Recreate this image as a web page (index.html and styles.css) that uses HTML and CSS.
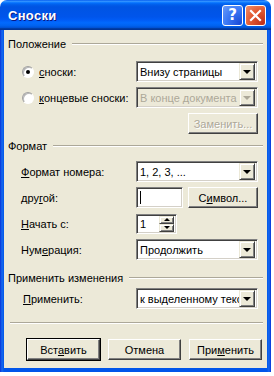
FILE: index.html
```html
<!DOCTYPE html>
<html lang="ru">
<head>
    <meta charset="UTF-8">
    <title>Сноски</title>
    <link rel="stylesheet" href="styles.css">
</head>
<body>
    <div class="window">
        <!-- Title bar -->
        <div class="titlebar">
            <span class="title">Сноски</span>
            <div class="caption-buttons">
                <span class="cap help">?</span>
                <span class="cap close">
                    <svg width="13" height="13" viewBox="0 0 13 13">
                        <path d="M2 2 L11 11 M11 2 L2 11" stroke="#fff" stroke-width="2.2" stroke-linecap="square"/>
                    </svg>
                </span>
            </div>
        </div>

        <div class="frame">
            <div class="dialog">
                <!-- Положение -->
                <div class="group-head first"><span>Положение</span><i class="rule"></i></div>
                <div class="rows first-rows">
                    <div class="row radio-row">
                        <label class="radio-label"><span class="radio checked"></span><span><u>с</u>носки:</span></label>
                        <div class="combo"><span class="combo-text">Внизу страницы</span><span class="drop"><i class="arrow"></i></span></div>
                    </div>
                    <div class="row radio-row">
                        <label class="radio-label"><span class="radio"></span><span><u>к</u>онцевые сноски:</span></label>
                        <div class="combo disabled"><span class="combo-text">В конце документа</span><span class="drop"><i class="arrow"></i></span></div>
                    </div>
                    <div class="row end">
                        <button class="btn small disabled">Заменить...</button>
                    </div>
                </div>

                <!-- Формат -->
                <div class="group-head second"><span>Формат</span><i class="rule"></i></div>
                <div class="rows second-rows">
                    <div class="row">
                        <span class="label"><u>Ф</u>ормат номера:</span>
                        <div class="combo"><span class="combo-text">1, 2, 3, ...</span><span class="drop"><i class="arrow"></i></span></div>
                    </div>
                    <div class="row">
                        <span class="label">дру<u>г</u>ой:</span>
                        <div class="pair">
                            <div class="field short"><i class="caret"></i></div>
                            <button class="btn small">С<u>и</u>мвол...</button>
                        </div>
                    </div>
                    <div class="row">
                        <span class="label"><u>Н</u>ачать с:</span>
                        <div class="pair">
                            <div class="field spin">
                                <span class="combo-text">1</span>
                                <span class="spin-btns">
                                    <span class="spin-btn"><i class="arrow up"></i></span>
                                    <span class="spin-btn"><i class="arrow"></i></span>
                                </span>
                            </div>
                        </div>
                    </div>
                    <div class="row">
                        <span class="label">Нум<u>е</u>рация:</span>
                        <div class="combo"><span class="combo-text">Продолжить</span><span class="drop"><i class="arrow"></i></span></div>
                    </div>
                </div>

                <!-- Применить изменения -->
                <div class="group-head third"><span>Применить изменения</span><i class="rule"></i></div>
                <div class="rows third-rows">
                    <div class="row">
                        <span class="label wide"><u>П</u>рименить:</span>
                        <div class="combo"><span class="combo-text">к выделенному тексту</span><span class="drop"><i class="arrow"></i></span></div>
                    </div>
                </div>

                <div class="separator"></div>

                <div class="footer">
                    <button class="btn default">Вст<u>а</u>вить</button>
                    <button class="btn">Отмена</button>
                    <button class="btn">При<u>м</u>енить</button>
                </div>
            </div>
        </div>
    </div>
</body>
</html>
```

FILE: styles.css
```css
body {
    margin: 0;
    background: #fff;
    font-family: "Liberation Sans", Arial, sans-serif;
    font-size: 11px;
    color: #000;
}

.window {
    width: 271px;
    height: 372px;
    display: flex;
    flex-direction: column;
}

/* Title bar */
.titlebar {
    height: 30px;
    box-sizing: border-box;
    display: flex;
    align-items: center;
    padding: 0 5px 0 8px;
    border-radius: 7px 7px 0 0;
    background: linear-gradient(#0058ee 0%, #3593ff 4%, #288eff 6%, #127dff 8%, #036ffc 10%, #0262ee 14%, #0057e5 20%, #0054e3 24%, #0055eb 56%, #005bf5 66%, #026afe 76%, #0062ef 86%, #0052d6 92%, #0040ab 94%, #003092 100%);
}

.title {
    flex: 1;
    color: #fff;
    font-weight: bold;
    font-size: 13px;
    letter-spacing: 0.3px;
    text-shadow: 1px 1px #0a1883;
}

.caption-buttons {
    display: flex;
    gap: 2px;
}

.cap {
    width: 21px;
    height: 21px;
    box-sizing: border-box;
    border: 1px solid #fff;
    border-radius: 3px;
    display: flex;
    align-items: center;
    justify-content: center;
}

.help {
    background: radial-gradient(circle at 90% 90%, #1b4cd8 0%, #3b78f5 55%, #6b9cf8 100%);
    color: #fff;
    font-weight: bold;
    font-size: 15px;
    font-family: "DejaVu Sans", sans-serif;
}

.close {
    background: radial-gradient(circle at 90% 90%, #c0301a 0%, #e35a32 55%, #f0906c 100%);
}

/* Frame and dialog body */
.frame {
    flex: 1;
    padding: 0 4px 4px;
    background: linear-gradient(90deg, #0831d9 0, #166aee 2px, #0055ea 4px, #0055ea calc(100% - 4px), #166aee calc(100% - 2px), #0831d9 100%);
}

.dialog {
    height: 338px;
    background: #ece9d8;
    padding: 0 4px;
    display: flex;
    flex-direction: column;
}

.group-head {
    display: flex;
    align-items: center;
    gap: 6px;
    height: 14px;
}

.group-head.first { margin-top: 7px; }
.group-head.second { margin-top: 5px; }
.group-head.third { margin-top: 11px; }

.rule {
    flex: 1;
    height: 1px;
    background: #aca899;
    border-bottom: 1px solid #fff;
}

.rows {
    display: flex;
    flex-direction: column;
    gap: 5px;
    padding: 0 5px 0 13px;
}

.first-rows { margin-top: 10px; }
.second-rows { margin-top: 8px; }
.third-rows { margin-top: 3px; }

.row {
    height: 21px;
    display: flex;
    align-items: center;
}

.row.end {
    justify-content: flex-end;
}

.label {
    flex: 1;
}

.label.wide {
    padding-left: 2px;
}

.radio-label {
    flex: 1;
    display: flex;
    align-items: center;
    gap: 5px;
    padding-left: 1px;
}

.radio {
    width: 12px;
    height: 12px;
    box-sizing: border-box;
    border-radius: 50%;
    background: #fff;
    border: 1px solid;
    border-color: #a0a0a0 #fff #fff #a0a0a0;
    box-shadow: inset 1px 1px 0 #b8b8b8;
    position: relative;
}

.radio.checked::after {
    content: "";
    position: absolute;
    left: 3px;
    top: 3px;
    width: 4px;
    height: 4px;
    border-radius: 50%;
    background: #000;
}

/* Combo boxes and fields */
.combo,
.field {
    width: 122px;
    height: 21px;
    box-sizing: border-box;
    background: #fff;
    border: 1px solid;
    border-color: #808080 #fff #fff #808080;
    box-shadow: inset 1px 1px 0 #404040, inset -1px -1px 0 #d4d0c8;
    display: flex;
    align-items: center;
    padding: 2px;
    overflow: hidden;
}

.combo-text {
    flex: 1;
    padding-left: 1px;
    white-space: nowrap;
    overflow: hidden;
}

.combo.disabled {
    background: #ece9d8;
    color: #aca899;
}

.drop,
.spin-btn {
    width: 16px;
    height: 17px;
    box-sizing: border-box;
    background: #ece9d8;
    border: 1px solid;
    border-color: #ece9d8 #404040 #404040 #ece9d8;
    box-shadow: inset 1px 1px 0 #fff, inset -1px -1px 0 #808080;
    display: flex;
    align-items: center;
    justify-content: center;
    flex-shrink: 0;
}

.arrow {
    width: 0;
    height: 0;
    border-left: 4px solid transparent;
    border-right: 4px solid transparent;
    border-top: 4px solid #000;
}

.arrow.up {
    border-top: none;
    border-bottom: 3px solid #000;
}

.disabled .arrow {
    border-top-color: #aca899;
}

.pair {
    width: 122px;
    display: flex;
    align-items: center;
    gap: 5px;
}

.field.short {
    width: 47px;
}

.caret {
    width: 1px;
    height: 13px;
    background: #000;
    margin-left: 1px;
}

.field.spin {
    width: 41px;
    height: 20px;
}

.spin-btns {
    display: flex;
    flex-direction: column;
}

.spin-btn {
    width: 15px;
    height: 8px;
}

.spin-btn .arrow {
    border-left-width: 3px;
    border-right-width: 3px;
    border-top-width: 3px;
}

/* Buttons */
.btn {
    width: 73px;
    height: 21px;
    padding: 0;
    font: inherit;
    color: #000;
    background: #ece9d8;
    border: 1px solid;
    border-color: #fff #404040 #404040 #fff;
    box-shadow: inset -1px -1px 0 #808080;
}

.btn.small {
    width: 70px;
    height: 21px;
}

.btn.disabled {
    color: #aca899;
    text-shadow: 1px 1px #fff;
}

.btn.default {
    outline: 1px solid #000;
    outline-offset: 0;
}

.separator {
    margin: 13px 0 0 2px;
    height: 1px;
    background: #aca899;
    border-bottom: 1px solid #fff;
}

.footer {
    margin-top: 15px;
    display: flex;
    justify-content: flex-end;
    gap: 8px;
    padding-right: 1px;
}
```
